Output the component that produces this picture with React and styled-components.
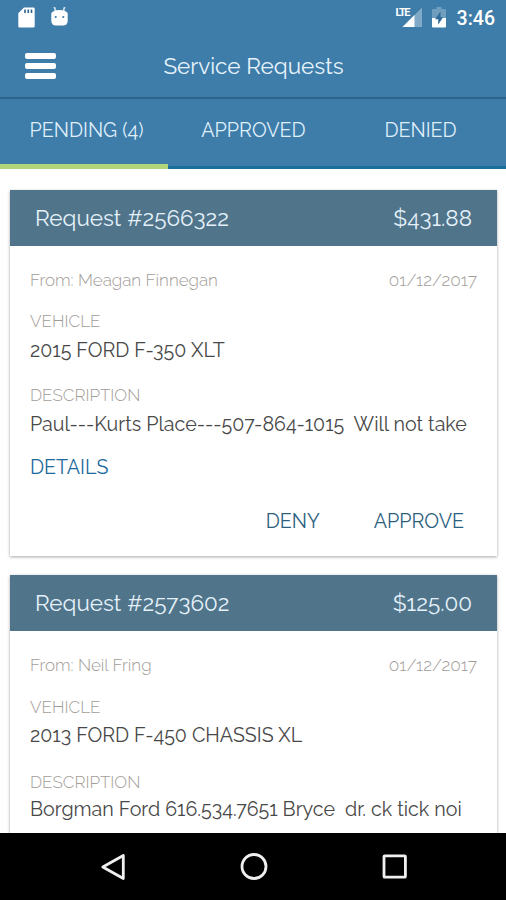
import React, { useState } from 'react';
import styled, { createGlobalStyle } from 'styled-components';

const requests = [
  {
    id: '2566322',
    amount: '$431.88',
    from: 'Meagan Finnegan',
    date: '01/12/2017',
    vehicle: '2015 FORD F-350 XLT',
    description: 'Paul---Kurts Place---507-864-1015  Will not take',
    canRespond: true,
  },
  {
    id: '2573602',
    amount: '$125.00',
    from: 'Neil Fring',
    date: '01/12/2017',
    vehicle: '2013 FORD F-450 CHASSIS XL',
    description: 'Borgman Ford 616.534.7651 Bryce  dr. ck tick noi',
    canRespond: false,
  },
];

const tabs = ['PENDING (4)', 'APPROVED', 'DENIED'];

const StatusBar = () => (
  <StatusRow>
    <StatusGroup>
      <svg width="17" height="21" viewBox="0 0 17 21">
        <path d="M6 0.5h9.5a1.2 1.2 0 0 1 1.2 1.2v17.6a1.2 1.2 0 0 1-1.2 1.2h-14a1.2 1.2 0 0 1-1.2-1.2V6.3z" fill="#fff" />
        <path d="M7 2.5v3.6M10.3 2.5v3.6M13.5 2.5v3.6" stroke="#2d6390" strokeWidth="1.6" />
      </svg>
      <svg width="17" height="21" viewBox="0 0 17 21">
        <path d="M3.2 -0.5l1.6 5M13.8 -0.5l-1.6 5" stroke="#c9deec" strokeWidth="1.8" />
        <path d="M0.3 6C3 2 14 2 16.7 6V14a4.5 4.5 0 0 1-4.5 4.5H4.8A4.5 4.5 0 0 1 0.3 14z" fill="#fff" />
        <circle cx="4.7" cy="10" r="1.1" fill="#3e7ca9" />
        <circle cx="12.3" cy="10" r="1.1" fill="#3e7ca9" />
      </svg>
    </StatusGroup>
    <StatusGroup $right>
      <Signal>
        <svg width="20" height="20" viewBox="0 0 20 20">
          <path d="M20 0.5v19.5H0.5z" fill="#7fa9c7" />
          <path d="M12.5 8V20H0.5z" fill="#fff" />
        </svg>
        <Lte>LTE</Lte>
      </Signal>
      <svg width="14" height="21" viewBox="0 0 14 21">
        <path d="M4.5 0h5v2H13a1 1 0 0 1 1 1v8H0V3a1 1 0 0 1 1-1h3.5z" fill="#6f9ebf" />
        <path d="M0 11h14v8.5a1 1 0 0 1-1 1H1a1 1 0 0 1-1-1z" fill="#fff" />
        <path d="M8.5 4.5L3 12.2h3.2v5.5L11 10.2H8.5z" fill="#2f6c9a" />
      </svg>
      <Clock>3:46</Clock>
    </StatusGroup>
  </StatusRow>
);

const RequestCard = ({ request }) => (
  <Card>
    <CardHeader>
      <span>Request #{request.id}</span>
      <Amount>{request.amount}</Amount>
    </CardHeader>
    <CardBody>
      <MetaRow>
        <span>From: {request.from}</span>
        <DateText>{request.date}</DateText>
      </MetaRow>
      <Label>VEHICLE</Label>
      <Value>{request.vehicle}</Value>
      <Label $spaced>DESCRIPTION</Label>
      <Value>{request.description}</Value>
      {request.canRespond && (
        <>
          <TextButton>DETAILS</TextButton>
          <Actions>
            <TextButton $muted>DENY</TextButton>
            <TextButton $muted>APPROVE</TextButton>
          </Actions>
        </>
      )}
    </CardBody>
  </Card>
);

const App = () => {
  const [activeTab, setActiveTab] = useState(0);

  return (
    <Screen>
      <GlobalStyle />
      <StatusBar />
      <AppBar>
        <MenuButton aria-label="Menu">
          <MenuLine />
          <MenuLine />
          <MenuLine />
        </MenuButton>
        <Title>Service Requests</Title>
      </AppBar>
      <TabBar>
        {tabs.map((tab, index) => (
          <Tab key={tab} $active={index === activeTab} onClick={() => setActiveTab(index)}>
            {tab}
          </Tab>
        ))}
      </TabBar>
      <List>
        {requests.map(request => (
          <RequestCard key={request.id} request={request} />
        ))}
      </List>
      <NavBar>
        <svg width="26" height="28" viewBox="0 0 26 28">
          <path d="M23.3 2.5v23L2.8 14z" fill="none" stroke="#f0f0f0" strokeWidth="2.8" strokeLinejoin="round" />
        </svg>
        <svg width="28" height="28" viewBox="0 0 28 28">
          <circle cx="14" cy="13.5" r="12" fill="none" stroke="#f0f0f0" strokeWidth="2.8" />
        </svg>
        <svg width="26" height="28" viewBox="0 0 26 28">
          <rect x="2" y="2.8" width="21.4" height="21.4" rx="0.8" fill="none" stroke="#f0f0f0" strokeWidth="2.8" />
        </svg>
      </NavBar>
    </Screen>
  );
};

const GlobalStyle = createGlobalStyle`
  * {
    box-sizing: border-box;
  }

  body {
    margin: 0;
    background-color: #fff;
    overflow: hidden;
  }
`;

const Screen = styled.div`
  display: flex;
  flex-direction: column;
  width: 506px;
  height: 900px;
  overflow: hidden;
  background-color: #fff;
  font-family: Raleway, Lato, sans-serif;
  white-space: pre;
`;

const StatusRow = styled.div`
  display: flex;
  justify-content: space-between;
  flex: none;
  height: 35px;
  padding: 7px 11px 0 18px;
  background-color: #3e7ca9;
`;

const StatusGroup = styled.div`
  display: flex;
  align-items: flex-start;
  gap: ${props => (props.$right ? '10.5px' : '16px')};
`;

const Signal = styled.div`
  position: relative;
  width: 26px;
  height: 20px;
  display: flex;
  justify-content: flex-end;
`;

const Lte = styled.span`
  position: absolute;
  left: 0;
  top: 0;
  padding-right: 1px;
  background-color: #3e7ca9;
  color: #fff;
  font: 700 11px/11px Roboto, sans-serif;
  letter-spacing: -1.4px;
`;

const Clock = styled.span`
  color: #fff;
  font: 500 19.5px/23px Roboto, sans-serif;
`;

const AppBar = styled.div`
  display: flex;
  align-items: center;
  flex: none;
  height: 62px;
  padding-left: 25px;
  background-color: #3e7ca9;
`;

const MenuButton = styled.button`
  display: flex;
  flex-direction: column;
  gap: 4px;
  width: 31px;
  padding: 0 0 1px;
  border: none;
  background: none;
  cursor: pointer;
`;

const MenuLine = styled.span`
  width: 31px;
  height: 6px;
  border-radius: 2px;
  background-color: #fff;
`;

const Title = styled.h1`
  flex: 1;
  margin: 0 55px 0 0;
  color: #e6f3fd;
  font-size: 22.5px;
  font-weight: 400;
  line-height: 28px;
  text-align: center;
`;

const TabBar = styled.div`
  display: grid;
  grid-template-columns: 168px 171px 167px;
  flex: none;
  height: 72px;
  border-top: 2px solid #2f638c;
  background-color: #3e7ca9;
`;

const Tab = styled.button`
  padding: ${props => (props.$active ? '2px 0 5px 5px' : '0 0 5px')};
  border: none;
  border-bottom: ${props => (props.$active ? '5px solid #b1d67a' : '3px solid #1b6f98')};
  background: none;
  color: #dfeefa;
  font-family: inherit;
  font-size: 19.7px;
  line-height: 24px;
  cursor: pointer;

  &:last-child {
    padding-right: 4px;
  }
`;

const List = styled.div`
  display: flex;
  flex-direction: column;
  flex: 1;
  min-height: 0;
  gap: 19px;
  padding: 21px 9px 0 10px;
  overflow: hidden;
`;

const Card = styled.div`
  flex: none;
  background-color: #fff;
  box-shadow: 0 1px 3px rgba(0, 0, 0, 0.35);
`;

const CardHeader = styled.div`
  display: flex;
  justify-content: space-between;
  align-items: center;
  height: 56px;
  padding: 0 25px 1px;
  background-color: #50748a;
  color: #e4f1fa;
  font-size: 22.5px;
`;

const Amount = styled.span`
  text-align: right;
`;

const CardBody = styled.div`
  padding: 22px 20px 23px;
`;

const MetaRow = styled.div`
  display: flex;
  justify-content: space-between;
  color: #a29c97;
  font-size: 17px;
  font-weight: 300;
  line-height: 24px;
`;

const DateText = styled.span`
  font-size: 17.3px;
`;

const Label = styled.div`
  margin-top: ${props => (props.$spaced ? '21px' : '18px')};
  color: #a29c97;
  font-size: 17px;
  font-weight: 300;
  line-height: 22px;

  ${Card} + ${Card} & {
    padding-top: ${props => (props.$spaced ? '2px' : '1px')};
    margin-bottom: ${props => (props.$spaced ? '-2px' : '-1px')};
  }
`;

const Value = styled.div`
  margin-top: 7px;
  color: #484848;
  font-size: 19.65px;
  line-height: 24px;
`;

const TextButton = styled.button`
  display: block;
  margin-top: 18px;
  padding: 0;
  border: none;
  background: none;
  color: ${props => (props.$muted ? '#2c5f80' : '#1d6a9c')};
  font-family: inherit;
  font-size: 19.7px;
  line-height: 24px;
  cursor: pointer;
`;

const Actions = styled.div`
  display: flex;
  justify-content: flex-end;
  gap: 54px;
  margin-top: 12px;
  padding-right: 13px;
`;

const NavBar = styled.div`
  display: flex;
  justify-content: center;
  align-items: center;
  gap: 114px;
  flex: none;
  height: 67px;
  padding-left: 1px;
  background-color: #000;
`;

export default App;
